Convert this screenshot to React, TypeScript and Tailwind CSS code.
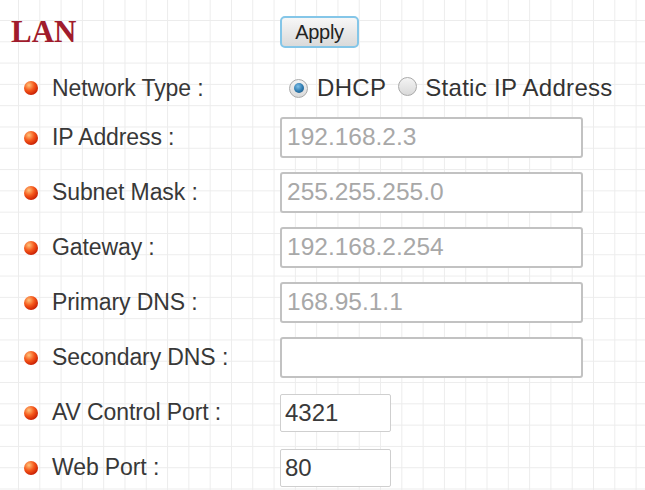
import type { ReactNode } from 'react'

const font = { fontFamily: '"Liberation Sans", Arial, sans-serif' }

function Bullet() {
  return (
    <span className="inline-block w-[14px] h-[14px] rounded-full shrink-0 bg-[radial-gradient(circle_at_35%_30%,#ffc27a_0%,#f5571a_40%,#c41800_80%,#8a1000_100%)]" />
  )
}

function Radio({ checked }: { checked?: boolean }) {
  return (
    <span className="inline-flex items-center justify-center w-[19px] h-[19px] rounded-full border border-[#a9a9a9] bg-[linear-gradient(to_bottom,#f4f4f4,#d9d9d9)] shrink-0">
      {checked && (
        <span className="w-[10px] h-[10px] rounded-full bg-[radial-gradient(circle_at_40%_35%,#7fc0e8_0%,#2c78ad_55%,#1b4f78_100%)]" />
      )}
    </span>
  )
}

function Row({ label, children, first }: { label: string; children: ReactNode; first?: boolean }) {
  return (
    <div className={first ? 'flex items-center h-[44px] mt-[12px]' : 'flex items-center h-[55px]'}>
      <div className="w-[280px] flex items-center pl-[24px] gap-[14px] shrink-0">
        <Bullet />
        <span className="text-[23px] text-[#383838] tracking-[-0.1px]">{label}</span>
      </div>
      {children}
    </div>
  )
}

function Field({ value, small, dark }: { value: string; small?: boolean; dark?: boolean }) {
  return (
    <div
      className={
        small
          ? 'w-[111px] h-[38px] border border-[#cfcfcf] rounded-[2px] bg-white flex items-center pl-[4px] text-[24px] text-[#3a3a3a]'
          : 'w-[303px] h-[41px] border-2 border-[#c2c2c2] rounded-[3px] bg-white flex items-center pl-[5px] text-[24.5px] ' +
            (dark ? 'text-[#3a3a3a]' : 'text-[#a8a8a8]')
      }
    >
      {value}
    </div>
  )
}

export default function App() {
  return (
    <div
      style={font}
      className="w-[645px] h-[490px] overflow-hidden bg-white bg-[linear-gradient(to_right,#ececec_1px,transparent_1px),linear-gradient(to_bottom,#ececec_1px,transparent_1px)] bg-[size:21.3px_21.3px] bg-[position:18px_20px] pt-[10px]"
    >
      {/* header */}
      <div className="flex items-center h-[44px]">
        <div className="w-[280px] pl-[11px] shrink-0">
          <span
            className="text-[31px] font-bold text-[#a01b2c] leading-none"
            style={{ fontFamily: '"Liberation Serif", "Times New Roman", serif' }}
          >
            LAN
          </span>
        </div>
        <button className="w-[79px] h-[32px] rounded-[5px] border-2 border-[#84c6e8] bg-[linear-gradient(to_bottom,#f7f7f7,#dadada)] text-[20px] text-[#222] tracking-[-0.3px] flex items-center justify-center">
          Apply
        </button>
      </div>

      <Row label="Network Type :" first>
        <div className="flex items-center pl-[9px] text-[24px] text-[#333] tracking-[0.3px]">
          <Radio checked />
          <span className="ml-[9px]">DHCP</span>
          <span className="ml-[12px]">
            <Radio />
          </span>
          <span className="ml-[8px]">Static IP Address</span>
        </div>
      </Row>
      <Row label="IP Address :">
        <Field value="192.168.2.3" />
      </Row>
      <Row label="Subnet Mask :">
        <Field value="255.255.255.0" />
      </Row>
      <Row label="Gateway :">
        <Field value="192.168.2.254" />
      </Row>
      <Row label="Primary DNS :">
        <Field value="168.95.1.1" />
      </Row>
      <Row label="Secondary DNS :">
        <Field value="" />
      </Row>
      <Row label="AV Control Port :">
        <Field value="4321" small />
      </Row>
      <Row label="Web Port :">
        <Field value="80" small />
      </Row>
    </div>
  )
}
